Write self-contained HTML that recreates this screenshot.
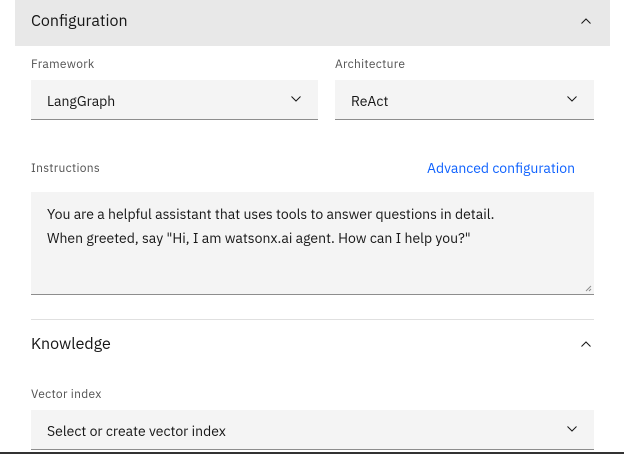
<!DOCTYPE html>
<html><head><meta charset="utf-8"><style>
*{margin:0;padding:0;box-sizing:border-box}
body{width:624px;height:454px;background:#fff;font-family:"IBM Plex Sans","Liberation Sans",sans-serif;color:#161616;position:relative;overflow:hidden}
.a{position:absolute}
.hdr{left:15px;top:0;width:595px;height:46px;background:#e8e8e8}
.h{font-size:16px;color:#161616}
.lbl{font-size:12px;color:#525252;letter-spacing:.3px}
.dd{background:#f4f4f4;border-bottom:1px solid #8d8d8d;height:40px;font-size:14px;padding:12px 16px}
.chev{position:absolute;right:17px;top:16px}
</style></head><body>
<div class="a hdr"></div>
<div class="a h" style="left:31px;top:11px">Configuration</div>
<svg class="a" style="left:581px;top:18px" width="10" height="6" viewBox="0 0 10 6"><path d="M0.5 5.5L5 1L9.5 5.5" fill="none" stroke="#161616" stroke-width="1"/></svg>

<div class="a lbl" style="left:31px;top:57px">Framework</div>
<div class="a lbl" style="left:335px;top:57px">Architecture</div>
<div class="a dd" style="left:31px;top:80px;width:287px">LangGraph<svg class="chev" width="10" height="6" viewBox="0 0 10 6"><path d="M0.5 0.5L5 5L9.5 0.5" fill="none" stroke="#161616" stroke-width="1"/></svg></div>
<div class="a dd" style="left:335px;top:80px;width:259px">ReAct<svg class="chev" width="10" height="6" viewBox="0 0 10 6"><path d="M0.5 0.5L5 5L9.5 0.5" fill="none" stroke="#161616" stroke-width="1"/></svg></div>

<div class="a lbl" style="left:31px;top:161px">Instructions</div>
<div class="a" style="left:427px;top:159px;font-size:14px;color:#0f62fe">Advanced configuration</div>
<div class="a" style="left:31px;top:192px;width:563px;height:103px;background:#f4f4f4;border-bottom:1px solid #8d8d8d;padding:10px 16px;font-size:14px;line-height:24px">You are a helpful assistant that uses tools to answer questions in detail.<br>When greeted, say "Hi, I am watsonx.ai agent. How can I help you?"
<svg class="a" style="right:2px;bottom:2px" width="7" height="7" viewBox="0 0 7 7"><path d="M1 6L6 1M4 6L6 4" stroke="#8d8d8d" stroke-width="1"/></svg></div>

<div class="a" style="left:31px;top:319px;width:563px;height:1px;background:#e0e0e0"></div>
<div class="a h" style="left:31px;top:334px">Knowledge</div>
<svg class="a" style="left:581px;top:341px" width="10" height="6" viewBox="0 0 10 6"><path d="M0.5 5.5L5 1L9.5 5.5" fill="none" stroke="#161616" stroke-width="1"/></svg>

<div class="a lbl" style="left:31px;top:387px">Vector index</div>
<div class="a dd" style="left:31px;top:410px;width:563px">Select or create vector index<svg class="chev" width="10" height="6" viewBox="0 0 10 6"><path d="M0.5 0.5L5 5L9.5 0.5" fill="none" stroke="#161616" stroke-width="1"/></svg></div>
<div class="a" style="left:0;top:452px;width:624px;height:2px;background:#333"></div>
</body></html>
